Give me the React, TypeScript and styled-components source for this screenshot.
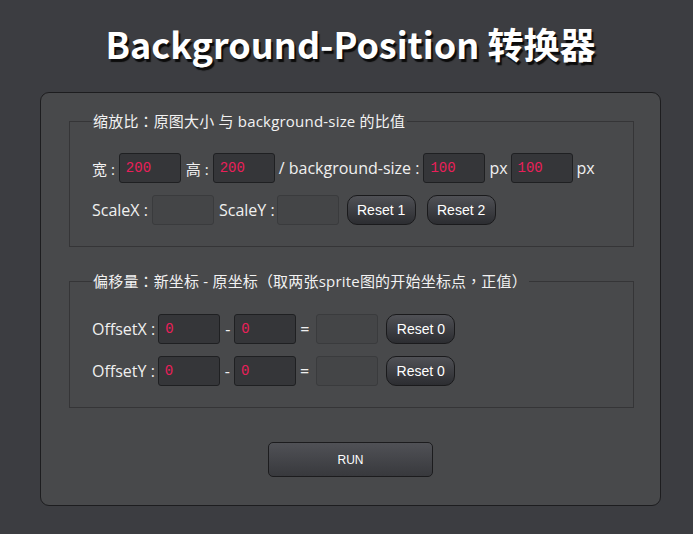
import React from "react";
import styled, { createGlobalStyle } from "styled-components";

const Global = createGlobalStyle`
  html, body { margin: 0; padding: 0; background: #3c3d41; }
  body { font-family: "Open Sans", "Noto Sans CJK SC", sans-serif; color: #f0f0f0; }
`;

const Page = styled.div`
  display: flex;
  flex-direction: column;
  align-items: center;
  padding: 20px 0 0 8px;
`;

const Title = styled.h1`
  margin: 0 0 24px;
  height: 48px;
  line-height: 46px;
  font-size: 36px;
  font-weight: 700;
  color: #ffffff;
  text-shadow: 2px 3px 1px #0c0c0c;
  font-family: "Noto Sans CJK SC", sans-serif;
`;

const Panel = styled.div`
  box-sizing: border-box;
  width: 621px;
  height: 414px;
  background: #48494b;
  border: 1px solid #1d1d1f;
  border-radius: 9px;
  padding: 18px 26px 27px 28px;
  display: flex;
  flex-direction: column;
`;

const Fieldset = styled.fieldset<{ $top: number; $mt: number }>`
  margin: ${(p) => p.$mt}px 0 0;
  border: 1px solid #353537;
  padding: ${(p) => p.$top}px 0 21px 22px;
  display: flex;
  flex-direction: column;
  gap: 12px;
  min-width: 0;
`;

const Legend = styled.legend`
  padding: 0 2px 0 1px;
  margin-left: 0;
  font-size: 15px;
  line-height: 20px;
  letter-spacing: 0.2px;
  color: #f2f2f2;
  white-space: pre;
`;

const Punct = styled.span`
  font-family: "Noto Sans CJK TC", sans-serif;
  letter-spacing: 0;
`;

const Row = styled.div`
  display: flex;
  align-items: center;
  gap: 4px;
  height: 30px;
`;

const Label = styled.span<{ $ml?: number; $mr?: number; $cjk?: boolean }>`
  font-size: ${(p) => (p.$cjk ? 15 : 16)}px;
  white-space: pre;
  margin-left: ${(p) => p.$ml ?? 0}px;
  margin-right: ${(p) => p.$mr ?? 0}px;
`;

const Field = styled.input<{ $ml?: number }>`
  box-sizing: border-box;
  width: 62px;
  height: 30px;
  margin: 0 0 0 ${(p) => p.$ml ?? 0}px;
  padding: 0 6px;
  border-radius: 3px;
  font-family: "Liberation Mono", "DejaVu Sans Mono", monospace;
  font-size: 14px;
  color: #ea1f5a;
  background: ${(p) => (p.disabled ? "#444547" : "#353639")};
  border: 1px solid ${(p) => (p.disabled ? "#3a3b3d" : "#1f2022")};
  outline: none;
`;

const Button = styled.button<{ $ml?: number }>`
  box-sizing: border-box;
  width: 69px;
  height: 30px;
  margin-left: ${(p) => p.$ml ?? 0}px;
  border-radius: 10px;
  border: 1px solid #1a1a1c;
  background: linear-gradient(#505156, #2c2d31);
  color: #ffffff;
  font-family: "Liberation Sans", Arial, sans-serif;
  font-size: 14px;
  padding: 0;
  cursor: pointer;
`;

const RunWrap = styled.div`
  display: flex;
  justify-content: center;
  margin-top: 34px;
  padding-right: 2px;
`;

const RunButton = styled.button`
  box-sizing: border-box;
  width: 165px;
  height: 35px;
  border-radius: 5px;
  border: 1px solid #1c1c1e;
  background: linear-gradient(#505156, #38393d);
  color: #ffffff;
  font-family: "Liberation Sans", Arial, sans-serif;
  font-size: 12px;
  cursor: pointer;
`;

export default function App() {
  return (
    <>
      <Global />
      <Page>
        <Title>Background-Position 转换器</Title>
        <Panel>
          <Fieldset $top={22} $mt={0}>
            <Legend>
              缩放比<Punct>：</Punct>原图大小 与 background-size 的比值
            </Legend>
            <Row>
              <Label $cjk>宽 :</Label>
              <Field defaultValue="200" />
              <Label $cjk $ml={1}>高 :</Label>
              <Field defaultValue="200" />
              <Label>/ background-size :</Label>
              <Field defaultValue="100" />
              <Label $mr={-1}>px</Label>
              <Field defaultValue="100" />
              <Label>px</Label>
            </Row>
            <Row>
              <Label>ScaleX :</Label>
              <Field disabled />
              <Label $ml={1} $mr={-2}>ScaleY :</Label>
              <Field disabled />
              <Button $ml={4}>Reset 1</Button>
              <Button $ml={7}>Reset 2</Button>
            </Row>
          </Fieldset>
          <Fieldset $top={23} $mt={24}>
            <Legend>
              偏移量<Punct>：</Punct>新坐标 - 原坐标<Punct>（</Punct>取两张sprite图的开始坐标点
              <Punct>，</Punct>正值<Punct>）</Punct>
            </Legend>
            <Row>
              <Label $mr={-1}>OffsetX :</Label>
              <Field defaultValue="0" />
              <Label $ml={1}>-</Label>
              <Field defaultValue="0" />
              <Label>=</Label>
              <Field disabled $ml={3} />
              <Button $ml={4}>Reset 0</Button>
            </Row>
            <Row>
              <Label $mr={-1}>OffsetY :</Label>
              <Field defaultValue="0" />
              <Label $ml={1}>-</Label>
              <Field defaultValue="0" />
              <Label>=</Label>
              <Field disabled $ml={3} />
              <Button $ml={4}>Reset 0</Button>
            </Row>
          </Fieldset>
          <RunWrap>
            <RunButton>RUN</RunButton>
          </RunWrap>
        </Panel>
      </Page>
    </>
  );
}
